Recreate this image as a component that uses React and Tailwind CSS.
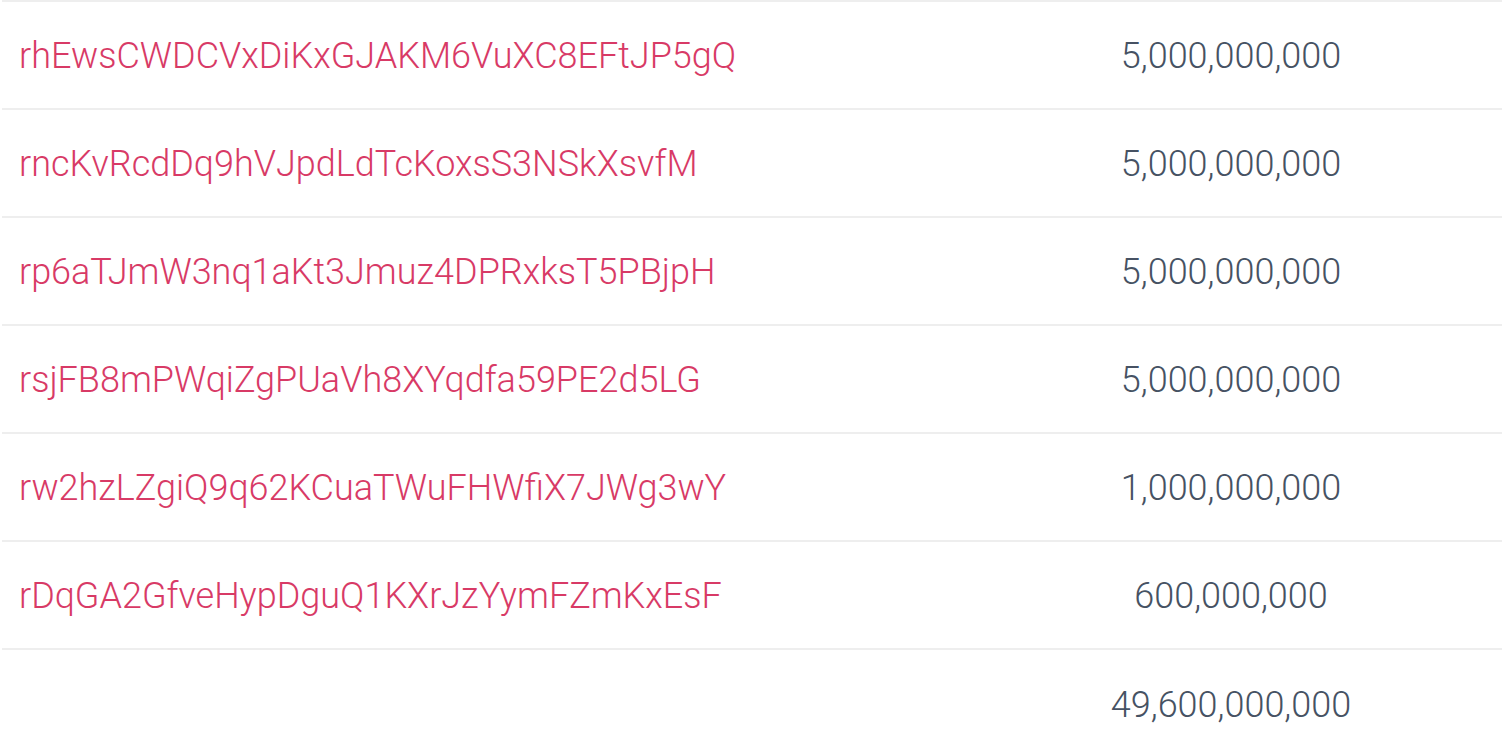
const rows = [
  { account: "rhEwsCWDCVxDiKxGJAKM6VuXC8EFtJP5gQ", amount: "5,000,000,000" },
  { account: "rncKvRcdDq9hVJpdLdTcKoxsS3NSkXsvfM", amount: "5,000,000,000" },
  { account: "rp6aTJmW3nq1aKt3Jmuz4DPRxksT5PBjpH", amount: "5,000,000,000" },
  { account: "rsjFB8mPWqiZgPUaVh8XYqdfa59PE2d5LG", amount: "5,000,000,000" },
  { account: "rw2hzLZgiQ9q62KCuaTWuFHWfiX7JWg3wY", amount: "1,000,000,000" },
  { account: "rDqGA2GfveHypDguQ1KXrJzYymFZmKxEsF", amount: "600,000,000" },
];

export default function App() {
  return (
    <div className="min-h-screen bg-white pl-[2px] font-['Roboto_Light','Roboto',sans-serif] font-light">
      <table className="w-full border-collapse text-[36px]">
        <tbody>
          {rows.map(({ account, amount }) => (
            <tr key={account} className="h-[108px] border-t-2 border-[#eeeeee]">
              <td className="pl-[17px] pt-[2px] align-middle text-[#d83a66]">
                <a href="#">{account}</a>
              </td>
              <td className="w-[542px] pt-[2px] text-center align-middle text-[#465263]">
                {amount}
              </td>
            </tr>
          ))}
          {/* total */}
          <tr className="h-[108px] border-t-2 border-[#eeeeee]">
            <td />
            <td className="w-[542px] pt-[2px] text-center align-middle text-[#465263]">
              49,600,000,000
            </td>
          </tr>
        </tbody>
      </table>
    </div>
  );
}
